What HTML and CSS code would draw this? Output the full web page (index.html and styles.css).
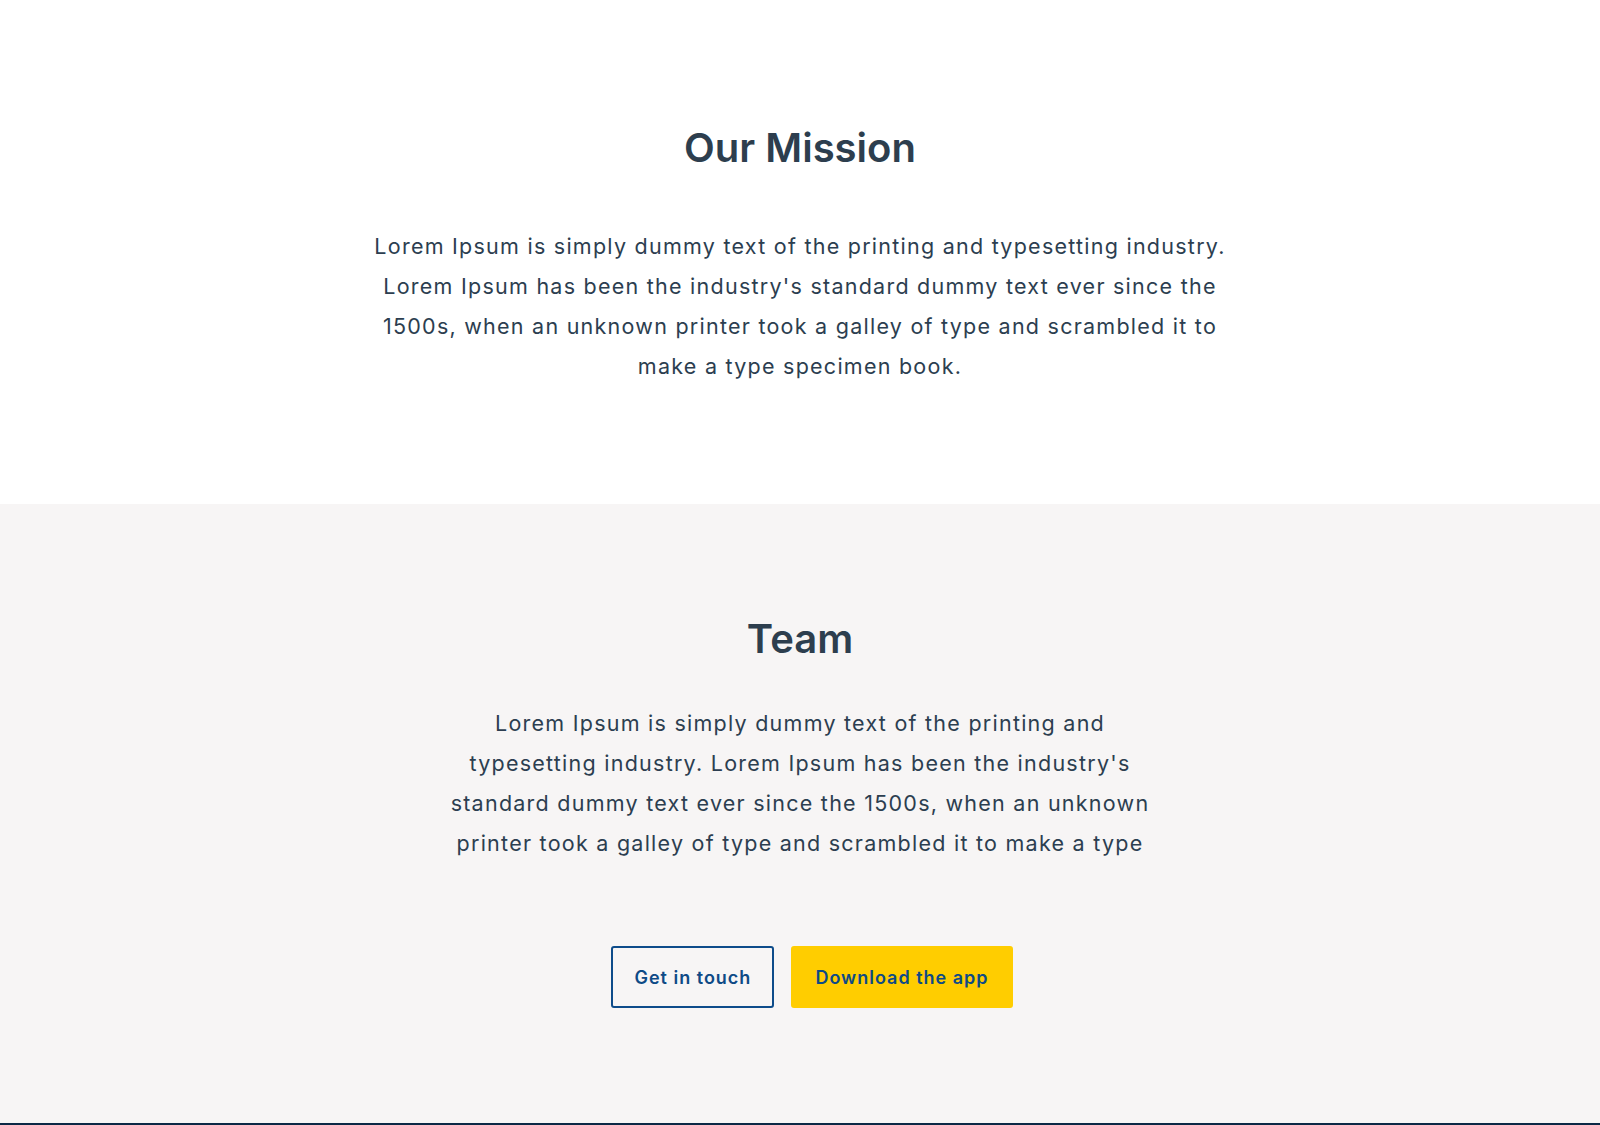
FILE: index.html
```html
<!DOCTYPE html>
<html lang="en">
<head>
<meta charset="utf-8">
<title>Our Mission</title>
<link rel="stylesheet" href="styles.css">
</head>
<body>
<section class="mission">
  <h2 class="section-title">Our Mission</h2>
  <p class="section-text mission-text">Lorem Ipsum is simply dummy text of the printing and typesetting industry. Lorem Ipsum has been the industry's standard dummy text ever since the 1500s, when an unknown printer took a galley of type and scrambled it to make a type specimen book.</p>
</section>
<section class="team">
  <h2 class="section-title">Team</h2>
  <p class="section-text team-text">Lorem Ipsum is simply dummy text of the printing and typesetting industry. Lorem Ipsum has been the industry's standard dummy text ever since the 1500s, when an unknown printer took a galley of type and scrambled it to make a type</p>
  <div class="actions">
    <a class="btn btn-outline" href="#">Get in touch</a>
    <a class="btn btn-primary" href="#">Download the app</a>
  </div>
</section>
<footer class="footer"></footer>
</body>
</html>
```
FILE: styles.css
```css
* { box-sizing: border-box; }
html, body { margin: 0; padding: 0; }
body {
  font-family: Inter, "Open Sans", "Noto Sans", sans-serif;
  color: #2c3e50;
  background: #ffffff;
}
.section-title {
  margin: 0;
  font-size: 40px;
  line-height: 48px;
  font-weight: 600;
  color: #2d3e4e;
  text-align: center;
  letter-spacing: 0;
}
.section-text {
  margin: 0 auto;
  font-size: 21.5px;
  line-height: 40px;
  letter-spacing: 1.25px;
  text-align: center;
  color: #2c3e50;
  font-weight: 400;
}
.mission {
  height: 504px;
  padding-top: 124px;
  background: #ffffff;
}
.mission-text {
  margin-top: 54px;
  max-width: 862px;
}
.team {
  background: #f7f5f5;
  padding-top: 111px;
  height: 619px;
}
.team-text {
  margin-top: 40px;
  max-width: 706px;
}
.actions {
  display: flex;
  justify-content: center;
  gap: 17px;
  margin-top: 83px;
  padding-left: 24px;
}
.btn {
  display: inline-flex;
  align-items: center;
  justify-content: center;
  height: 62px;
  padding: 0 21px;
  border: 2px solid #0e4c8a;
  border-radius: 3px;
  font-size: 18px;
  font-weight: 600;
  letter-spacing: 1px;
  color: #0e4a86;
  text-decoration: none;
}
.btn-outline { background: transparent; }
.btn-primary { background: #ffcd00; border-color: #ffcd00; padding: 0 22px; }
.footer {
  height: 40px;
  background: #0b2845;
}
```
